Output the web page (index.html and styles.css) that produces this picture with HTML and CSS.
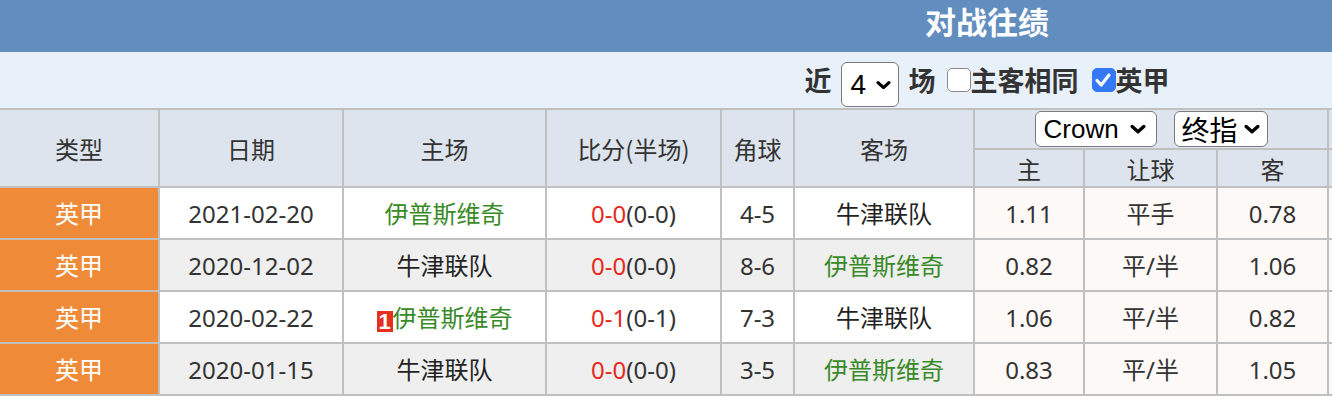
FILE: index.html
```html
<!DOCTYPE html>
<html lang="zh-CN">
<head>
<meta charset="utf-8">
<title>对战往绩</title>
<link rel="stylesheet" href="styles.css">
</head>
<body>
<div class="page">
  <div class="title-bar">对战往绩</div>
  <div class="filter-bar">
    <span class="flabel lbl-near">近</span>
    <span class="sel sel-count"><span>4</span><svg class="chev" viewBox="0 0 16 10" width="15" height="10"><path d="M2.2 2.5 L8 7.8 L13.8 2.5" fill="none" stroke="#000" stroke-width="3.4" stroke-linecap="round" stroke-linejoin="round"/></svg></span>
    <span class="flabel lbl-games">场</span>
    <span class="cb"></span>
    <span class="flabel lbl-same">主客相同</span>
    <span class="cb cb-on"><svg viewBox="0 0 24 24" width="24" height="24"><path d="M6 12.5 L10.2 17 L18 7" fill="none" stroke="#fff" stroke-width="3.2" stroke-linecap="round" stroke-linejoin="round"/></svg></span>
    <span class="flabel">英甲</span>
  </div>
  <table class="h2h">
    <colgroup>
      <col class="c-type"><col class="c-date"><col class="c-home"><col class="c-score"><col class="c-corner"><col class="c-away"><col class="c-o1"><col class="c-o2"><col class="c-o3"><col class="c-rest">
    </colgroup>
    <thead>
      <tr class="hr-a">
        <th rowspan="2">类型</th>
        <th rowspan="2">日期</th>
        <th rowspan="2">主场</th>
        <th rowspan="2">比分(半场)</th>
        <th rowspan="2">角球</th>
        <th rowspan="2">客场</th>
        <th colspan="3" class="sel-cell">
          <div class="sel-row">
            <span class="sel sel-crown"><span class="sel-latin">Crown</span><svg class="chev" viewBox="0 0 16 10" width="16" height="10"><path d="M2.2 2.5 L8 7.8 L13.8 2.5" fill="none" stroke="#000" stroke-width="3.4" stroke-linecap="round" stroke-linejoin="round"/></svg></span>
            <span class="sel sel-final"><span class="sel-cn">终指</span><svg class="chev" viewBox="0 0 16 10" width="16" height="10"><path d="M2.2 2.5 L8 7.8 L13.8 2.5" fill="none" stroke="#000" stroke-width="3.4" stroke-linecap="round" stroke-linejoin="round"/></svg></span>
          </div>
        </th>
        <th class="rest"></th>
      </tr>
      <tr class="hr-b">
        <th>主</th>
        <th>让球</th>
        <th>客</th>
        <th class="rest"></th>
      </tr>
    </thead>
    <tbody>
      <tr>
        <td class="type">英甲</td>
        <td>2021-02-20</td>
        <td><span class="team-g">伊普斯维奇</span></td>
        <td><span class="red">0-0</span>(0-0)</td>
        <td>4-5</td>
        <td class="team">牛津联队</td>
        <td class="odds">1.11</td>
        <td class="odds">平手</td>
        <td class="odds">0.78</td>
        <td class="odds"></td>
      </tr>
      <tr class="alt">
        <td class="type">英甲</td>
        <td>2020-12-02</td>
        <td class="team">牛津联队</td>
        <td><span class="red">0-0</span>(0-0)</td>
        <td>8-6</td>
        <td><span class="team-g">伊普斯维奇</span></td>
        <td class="odds">0.82</td>
        <td class="odds">平/半</td>
        <td class="odds">1.06</td>
        <td class="odds"></td>
      </tr>
      <tr>
        <td class="type">英甲</td>
        <td>2020-02-22</td>
        <td><span class="card">1</span><span class="team-g">伊普斯维奇</span></td>
        <td><span class="red">0-1</span>(0-1)</td>
        <td>7-3</td>
        <td class="team">牛津联队</td>
        <td class="odds">1.06</td>
        <td class="odds">平/半</td>
        <td class="odds">0.82</td>
        <td class="odds"></td>
      </tr>
      <tr class="alt">
        <td class="type">英甲</td>
        <td>2020-01-15</td>
        <td class="team">牛津联队</td>
        <td><span class="red">0-0</span>(0-0)</td>
        <td>3-5</td>
        <td><span class="team-g">伊普斯维奇</span></td>
        <td class="odds">0.83</td>
        <td class="odds">平/半</td>
        <td class="odds">1.05</td>
        <td class="odds"></td>
      </tr>
    </tbody>
  </table>
</div>
</body>
</html>
```

FILE: styles.css
```css
html {
  overflow: hidden;
}
body {
  margin: 0;
  background: #fff;
  font-family: "Noto Sans", "Noto Sans CJK SC", sans-serif;
  color: #333;
}
.page {
  width: 1974px;
}
.title-bar {
  height: 52px;
  box-sizing: border-box;
  padding-bottom: 10px;
  background: #628dbf;
  color: #fff;
  text-align: center;
  font-size: 31px;
  font-weight: bold;
  line-height: 42px;
  font-family: "Noto Sans CJK SC", sans-serif;
}
.filter-bar {
  height: 56px;
  background: #e8f0fa;
  display: flex;
  justify-content: center;
  align-items: center;
}
.flabel {
  font-family: "Noto Sans CJK SC", sans-serif;
  font-size: 27px;
  font-weight: bold;
  color: #333;
  line-height: 30px;
}
.lbl-near { margin-right: 9px; }
.lbl-games { margin-right: 11px; }
.lbl-same { margin-right: 13px; }
.sel {
  display: inline-flex;
  align-items: center;
  justify-content: space-between;
  box-sizing: border-box;
  background: #fff;
  border: 1.5px solid #7a7a7a;
  border-radius: 6px;
  color: #000;
}
.chev {
  display: block;
  flex: none;
}
.sel-count {
  width: 58px;
  height: 45px;
  margin-top: 9px;
  margin-right: 10px;
  padding: 0 7px 0 9px;
  font-family: "Liberation Sans", sans-serif;
  font-size: 28px;
}
.cb {
  width: 24px;
  height: 24px;
  box-sizing: border-box;
  border: 1.5px solid #8a8a8a;
  border-radius: 5px;
  background: #fff;
  display: inline-block;
}
.cb-on {
  background: #3478f6;
  border-color: #3478f6;
  position: relative;
}
.cb-on svg {
  position: absolute;
  left: -1.5px;
  top: -1.5px;
}
.h2h {
  width: 1974px;
  table-layout: fixed;
  border-collapse: separate;
  border-spacing: 0;
  border-top: 2px solid #c0c0c0;
  font-size: 24px;
}
.c-type { width: 160px; }
.c-date { width: 184px; }
.c-home { width: 203px; }
.c-score { width: 175px; }
.c-corner { width: 73px; }
.c-away { width: 180px; }
.c-o1 { width: 110px; }
.c-o2 { width: 133px; }
.c-o3 { width: 111px; }
.h2h th,
.h2h td {
  box-sizing: border-box;
  padding: 0;
  border-right: 2px solid #c0c0c0;
  border-bottom: 2px solid #c0c0c0;
  text-align: center;
  vertical-align: middle;
  white-space: nowrap;
  overflow: hidden;
}
.h2h th {
  background: #dde4ed;
  font-weight: normal;
  color: #333;
  font-family: "Noto Sans CJK SC", sans-serif;
}
.hr-a th {
  height: 40px;
}
.hr-b th {
  height: 38px;
}
.sel-row {
  display: flex;
  justify-content: center;
  gap: 17px;
}
.sel-crown {
  width: 122px;
  height: 36px;
  padding: 0 10px 0 8px;
}
.sel-final {
  width: 94px;
  height: 36px;
  padding: 0 7px 0 7px;
}
.sel-latin {
  font-family: "Liberation Sans", sans-serif;
  font-size: 26px;
}
.sel-cn {
  font-family: "Noto Sans CJK SC", sans-serif;
  font-size: 28px;
  line-height: 32px;
}
.h2h td {
  height: 52px;
  background: #fff;
  line-height: 30px;
  padding-top: 2px;
}
.h2h tr.alt td {
  background: #efefef;
}
.h2h td.type,
.h2h tr.alt td.type {
  background: #ef8b38;
  color: #fff;
}
.h2h td.odds,
.h2h tr.alt td.odds {
  background: #fdf9f6;
}
.team {
  color: #222;
}
.team-g {
  color: #3a8a28;
}
.red {
  color: #e8281c;
}
.card {
  display: inline-block;
  width: 16px;
  height: 21px;
  background: #e6301f;
  color: #fff;
  font-family: "Liberation Sans", sans-serif;
  font-weight: bold;
  font-size: 22px;
  line-height: 22px;
  vertical-align: -2px;
  text-align: center;
}
```
